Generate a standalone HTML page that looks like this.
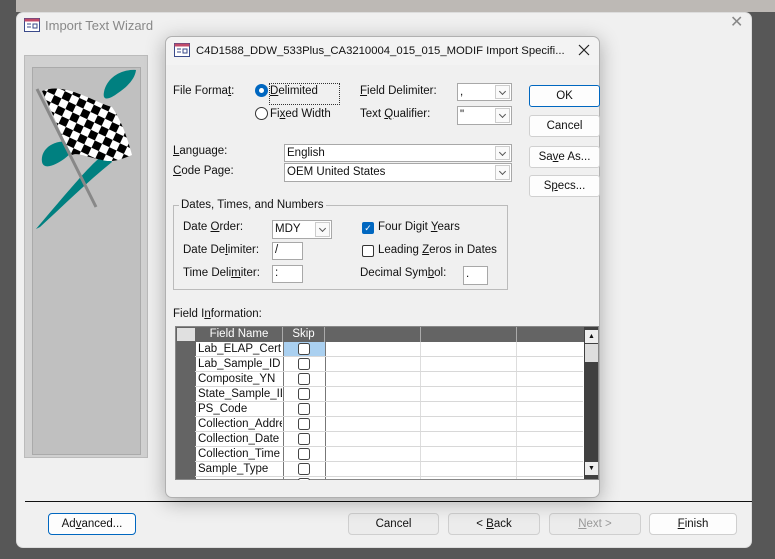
<!DOCTYPE html>
<html><head><meta charset="utf-8"><style>
*{box-sizing:border-box;margin:0;padding:0}
body{width:775px;height:559px;background:#575757;position:relative;overflow:hidden;font-family:"Liberation Sans",sans-serif;font-size:11.5px;color:#111}
.a{position:absolute}
.lbl{position:absolute;white-space:nowrap;line-height:14px}
.box{position:absolute;background:#fff;border:1px solid #a8a8a8;padding-left:2px;line-height:15px}
.cb{position:absolute;background:#fff;border:1px solid #a8a8a8;line-height:16px;padding-left:2px}
.cb .arr{position:absolute;right:1px;top:1px;bottom:1px;width:15px;border:1px solid #ccc;background:#fafafa}
.cb .arr:after{content:"";position:absolute;left:4px;top:3px;width:4px;height:4px;border-right:1px solid #555;border-bottom:1px solid #555;transform:rotate(45deg)}
.btn{position:absolute;background:#fdfdfd;border:1px solid #d0d0d0;border-radius:3px;text-align:center;line-height:20px}
.wbtn{position:absolute;background:#fdfdfd;border:1px solid #cfcfcf;border-radius:4px;text-align:center;line-height:20px}
u{text-decoration:underline}
</style></head><body>
<div class="a" style="left:0;top:0;width:775px;height:12px;background:#bdb9b5"></div>
<div class="a" style="left:0;top:0;width:16px;height:12px;background:#575757"></div>
<div class="a" style="left:16px;top:12px;width:736px;height:536px;background:#f0f0f0;border-radius:7px;border:1px solid #ddd"></div>
<svg class="a" style="left:24px;top:18px" width="16" height="14"><rect x="0.5" y="0.5" width="15" height="13" fill="#fff" stroke="#3a4a8a"/><rect x="0.5" y="0.5" width="15" height="3" fill="#c04a6a"/><path d="M3 6h4M3 9h4M9 6h4v4h-4z" stroke="#3a4a8a" fill="none"/></svg>
<div class="lbl" style="left:45px;top:19px;font-size:13px;color:#888">Import Text Wizard</div>
<div class="lbl" style="left:730px;top:16px;font-size:16px;color:#888">✕</div>
<div class="a" style="left:24px;top:55px;width:124px;height:403px;border:1px solid #bbb;background:#d0d0d0"></div>
<div class="a" style="left:32px;top:67px;width:109px;height:388px;background:#c0c0c0;border:1px solid #aaa"></div>
<svg class="a" style="left:32px;top:67px" width="109" height="170">
<defs><pattern id="ck" width="16" height="16" patternUnits="userSpaceOnUse" patternTransform="rotate(25)"><rect width="16" height="16" fill="#fff"/><rect width="8" height="8" fill="#000"/><rect x="8" y="8" width="8" height="8" fill="#000"/></pattern></defs>
<path d="M104 3 C90 2 75 10 72 25 C70 35 78 32 86 26 C95 20 103 12 104 3Z" fill="#008080"/>
<path d="M38 75 C22 72 8 82 10 95 C12 104 25 97 32 92 C40 86 44 80 38 75Z" fill="#008080"/>
<path d="M75 85 C60 95 40 120 4 162 L8 160 C30 140 55 115 80 95Z" fill="#008080"/>
<line x1="5" y1="22" x2="64" y2="140" stroke="#888" stroke-width="3"/>
<path d="M10 24 C25 18 40 24 55 30 C65 34 72 38 80 40 C90 55 95 70 100 88 C90 92 80 96 70 93 C55 90 45 85 40 88 C30 70 20 45 10 24Z" fill="url(#ck)"/>
</svg>
<div class="a" style="left:25px;top:501px;width:727px;height:1px;background:#111"></div>
<div class="wbtn" style="left:48px;top:513px;width:88px;height:22px;border-color:#0067c0">Ad<u>v</u>anced...</div>
<div class="wbtn" style="left:348px;top:513px;width:91px;height:22px;background:#ececec">Cancel</div>
<div class="wbtn" style="left:448px;top:513px;width:92px;height:22px;background:#ececec">&lt; <u>B</u>ack</div>
<div class="wbtn" style="left:549px;top:513px;width:92px;height:22px;background:#ececec;color:#999"><u>N</u>ext &gt;</div>
<div class="wbtn" style="left:649px;top:513px;width:88px;height:22px"><u>F</u>inish</div>

<div class="a" style="left:165px;top:36px;width:435px;height:462px;background:#f0f0f0;border:1px solid #b0b0b0;border-radius:7px;box-shadow:0 4px 20px rgba(0,0,0,.3)"></div>
<div class="a" style="left:166px;top:37px;width:433px;height:28px;background:#f3f3f3;border-radius:7px 7px 0 0"></div>
<svg class="a" style="left:174px;top:43px" width="16" height="14"><rect x="0.5" y="0.5" width="15" height="13" fill="#fff" stroke="#3a4a8a"/><rect x="0.5" y="0.5" width="15" height="3" fill="#c04a6a"/><path d="M3 6h4M3 9h4M9 6h4v4h-4z" stroke="#3a4a8a" fill="none"/></svg>
<div class="lbl" style="left:196px;top:44px;font-size:11.3px;color:#111">C4D1588_DDW_533Plus_CA3210004_015_015_MODIF Import Specifi...</div>
<svg class="a" style="left:578px;top:44px" width="12" height="12"><path d="M1 1L11 11M11 1L1 11" stroke="#222" stroke-width="1.2"/></svg>

<div class="lbl" style="left:173px;top:84px">File Forma<u>t</u>:</div>
<div class="a" style="left:255px;top:84px;width:13px;height:13px;border-radius:50%;background:#0067c0"></div>
<div class="a" style="left:259px;top:88px;width:5px;height:5px;border-radius:50%;background:#fff"></div>
<div class="a" style="left:269px;top:83px;width:71px;height:22px;border:1px dotted #333"></div>
<div class="lbl" style="left:270px;top:84px"><u>D</u>elimited</div>
<div class="a" style="left:255px;top:107px;width:13px;height:13px;border-radius:50%;border:1px solid #333;background:#fff"></div>
<div class="lbl" style="left:270px;top:107px">Fi<u>x</u>ed Width</div>
<div class="lbl" style="left:360px;top:84px"><u>F</u>ield Delimiter:</div>
<div class="cb" style="left:457px;top:83px;width:55px;height:18px">,<div class="arr"></div></div>
<div class="lbl" style="left:360px;top:107px">Text <u>Q</u>ualifier:</div>
<div class="cb" style="left:457px;top:106px;width:55px;height:19px">"<div class="arr"></div></div>
<div class="btn" style="left:529px;top:85px;width:71px;height:22px;border-color:#0067c0">OK</div>
<div class="btn" style="left:529px;top:115px;width:71px;height:22px">Cancel</div>
<div class="btn" style="left:529px;top:146px;width:71px;height:22px">Sa<u>v</u>e As...</div>
<div class="btn" style="left:529px;top:175px;width:71px;height:22px">S<u>p</u>ecs...</div>

<div class="lbl" style="left:173px;top:144px"><u>L</u>anguage:</div>
<div class="cb" style="left:284px;top:144px;width:228px;height:18px">English<div class="arr"></div></div>
<div class="lbl" style="left:173px;top:164px"><u>C</u>ode Page:</div>
<div class="cb" style="left:284px;top:163px;width:228px;height:19px">OEM United States<div class="arr"></div></div>

<div class="a" style="left:173px;top:205px;width:335px;height:85px;border:1px solid #bbb"></div>
<div class="lbl" style="left:179px;top:198px;background:#f0f0f0;padding:0 2px">Dates, Times, and Numbers</div>
<div class="lbl" style="left:183px;top:220px">Date <u>O</u>rder:</div>
<div class="cb" style="left:272px;top:220px;width:60px;height:19px">MDY<div class="arr"></div></div>
<div class="lbl" style="left:183px;top:243px">Date De<u>l</u>imiter:</div>
<div class="box" style="left:272px;top:242px;width:31px;height:18px">/</div>
<div class="lbl" style="left:183px;top:266px">Time Deli<u>m</u>iter:</div>
<div class="box" style="left:272px;top:265px;width:31px;height:18px">:</div>
<div class="a" style="left:362px;top:222px;width:12px;height:12px;border-radius:2px;background:#0067c0;color:#fff;font-size:9px;line-height:12px;text-align:center">✓</div>
<div class="lbl" style="left:378px;top:220px">Four Digit <u>Y</u>ears</div>
<div class="a" style="left:362px;top:245px;width:12px;height:12px;border-radius:2px;border:1px solid #333;background:#fff"></div>
<div class="lbl" style="left:378px;top:243px">Leading <u>Z</u>eros in Dates</div>
<div class="lbl" style="left:360px;top:266px">Decimal Sym<u>b</u>ol:</div>
<div class="box" style="left:463px;top:266px;width:25px;height:19px">.</div>

<div class="lbl" style="left:173px;top:307px">Field I<u>n</u>formation:</div>
<div class="a" style="left:175px;top:326px;width:424px;height:154px;background:#fff;border:1px solid #888;overflow:hidden">
 <div class="a" style="left:0;top:0;width:423px;height:15px;background:#646464"></div>
 <div class="a" style="left:0;top:0;width:20px;height:154px;background:#646464"></div>
 <div class="a" style="left:1px;top:1px;width:18px;height:13px;background:#e0e0e0"></div>
 <div class="lbl" style="left:20px;top:0;width:87px;text-align:center;color:#fff;border-right:1px solid #aaa;line-height:15px">Field Name</div>
 <div class="lbl" style="left:107px;top:0;width:42px;text-align:center;color:#fff;border-right:1px solid #aaa;line-height:15px">Skip</div>
 <div class="a" style="left:244px;top:0;width:1px;height:15px;background:#aaa"></div>
 <div class="a" style="left:340px;top:0;width:1px;height:15px;background:#aaa"></div>
 <div class="a" style="left:107px;top:15px;width:1px;height:140px;background:#777"></div>
 <div class="a" style="left:149px;top:15px;width:1px;height:140px;background:#777"></div>
 <div class="a" style="left:244px;top:15px;width:1px;height:140px;background:#ddd"></div>
 <div class="a" style="left:340px;top:15px;width:1px;height:140px;background:#ddd"></div>
 <div class="a" style="left:108px;top:15px;width:41px;height:15px;background:#aad0f0"></div>
 <div class="a" style="left:408px;top:0;width:15px;height:154px;background:#404040"></div>
 <div class="a" style="left:409px;top:3px;width:13px;height:13px;background:#eee;font-size:7px;text-align:center;line-height:13px">▲</div>
 <div class="a" style="left:409px;top:17px;width:13px;height:18px;background:#ddd"></div>
 <div class="a" style="left:409px;top:135px;width:13px;height:13px;background:#eee;font-size:7px;text-align:center;line-height:13px">▼</div>
</div>
<div class="a" style="left:175px;top:326px;width:408px;height:154px;pointer-events:none">
 <div class="lbl" style="left:23px;top:16px;width:84px;overflow:hidden">Lab_ELAP_CertID</div>
 <div class="lbl" style="left:23px;top:31px">Lab_Sample_ID</div>
 <div class="lbl" style="left:23px;top:46px">Composite_YN</div>
 <div class="lbl" style="left:23px;top:61px;width:84px;overflow:hidden">State_Sample_ID</div>
 <div class="lbl" style="left:23px;top:76px">PS_Code</div>
 <div class="lbl" style="left:23px;top:91px;width:84px;overflow:hidden">Collection_Address</div>
 <div class="lbl" style="left:23px;top:106px">Collection_Date</div>
 <div class="lbl" style="left:23px;top:121px">Collection_Time</div>
 <div class="lbl" style="left:23px;top:136px">Sample_Type</div>
 <svg class="a" style="left:20px;top:0" width="388" height="154">
  <g stroke="#d8d8d8"><path d="M0 30.5h388M0 45.5h388M0 60.5h388M0 75.5h388M0 90.5h388M0 105.5h388M0 120.5h388M0 135.5h388M0 150.5h388"/></g>
  <g stroke="#444" fill="#fff"><rect x="103.5" y="17.5" width="11" height="11" rx="2"/><rect x="103.5" y="32.5" width="11" height="11" rx="2"/><rect x="103.5" y="47.5" width="11" height="11" rx="2"/><rect x="103.5" y="62.5" width="11" height="11" rx="2"/><rect x="103.5" y="77.5" width="11" height="11" rx="2"/><rect x="103.5" y="92.5" width="11" height="11" rx="2"/><rect x="103.5" y="107.5" width="11" height="11" rx="2"/><rect x="103.5" y="122.5" width="11" height="11" rx="2"/><rect x="103.5" y="137.5" width="11" height="11" rx="2"/><rect x="103.5" y="152.5" width="11" height="11" rx="2"/></g>
 </svg>
</div>
</body></html>
